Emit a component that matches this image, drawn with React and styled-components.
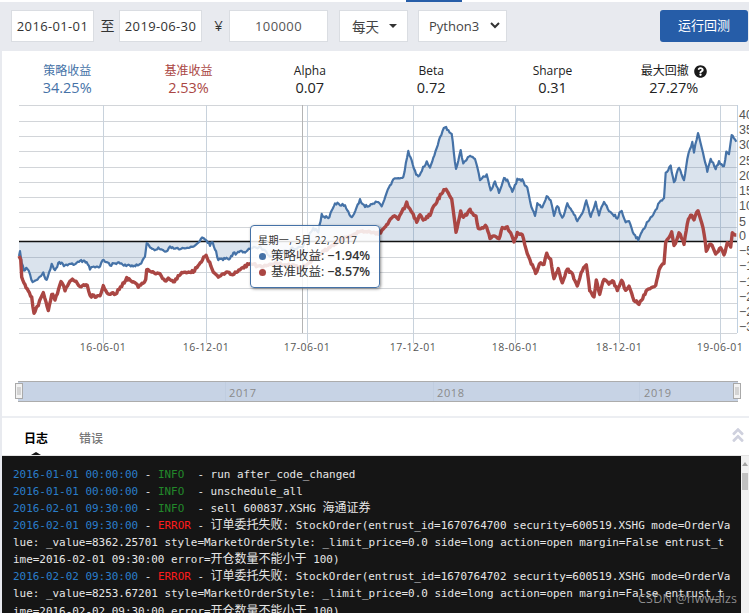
import React, { useMemo } from "react";
import styled, { createGlobalStyle } from "styled-components";
import { FaQuestionCircle, FaAngleDoubleUp } from "react-icons/fa";

const sans = `"Open Sans", "Noto Sans", "Noto Sans CJK SC", sans-serif`;

const Global = createGlobalStyle`
  html, body { margin: 0; padding: 0; background: #fff; }
  body { width: 749px; height: 613px; overflow: hidden; font-family: ${sans}; }
  * { box-sizing: border-box; }
`;

const Page = styled.div`
  width: 749px; height: 613px; overflow: hidden; position: relative;
  display: flex; flex-direction: column; background: #e8eaef;
`;
const TopStrip = styled.div`
  height: 2px; flex: none; padding-left: 406px; background: #fff;
  &::before { content: ""; display: block; width: 56px; height: 2px; background: #265da8; }
`;
const Toolbar = styled.div`
  height: 49px; flex: none; display: flex; align-items: center;
  padding: 0 1px 0 11px; background: #e8eaef;
`;
const Field = styled.div`
  width: ${(p) => p.$w}px; height: 32px; margin-top: -2px;
  margin-left: ${(p) => p.$ml || 0}px;
  display: flex; align-items: center; justify-content: center;
  background: #fff; border: 1px solid #dadde2;
  font-size: 13px; letter-spacing: ${(p) => p.$ls || 0}px; color: ${(p) => p.$c || "#333"};
`;
const Sep = styled.span`
  width: ${(p) => p.$w}px; padding-left: ${(p) => p.$pl}px; margin-top: -4px; text-align: center;
  font-size: ${(p) => p.$fs}px; color: #333;
`;
const SelectBox = styled(Field)`
  justify-content: flex-start; padding-left: ${(p) => p.$pad}px; gap: ${(p) => p.$gap}px;
  font-size: ${(p) => p.$fs}px; color: #444;
`;
const Caret = styled.i`
  width: 0; height: 0; margin-left: 2px;
  border-left: 4.5px solid transparent; border-right: 4.5px solid transparent; border-top: 4px solid #333;
`;
const RunButton = styled.button`
  width: 88px; height: 32px; margin: -2px 0 0 auto; padding: 0 0 2px; border: 0; border-radius: 3px;
  background: #265da8; color: #fff; font: 13px ${sans};
`;
const Main = styled.div`
  flex: 1; min-height: 0; margin-left: 2px; background: #fff; display: flex; flex-direction: column;
`;
const Stats = styled.div`
  height: 49px; flex: none; display: grid; grid-template-columns: repeat(6, 121.33px);
  padding: 11px 0 0 4.5px;
`;
const Stat = styled.div`
  text-align: center; color: ${(p) => p.$c || "#222"};
`;
const StatLabel = styled.div`
  font-size: 12px; line-height: 18px; display: flex; gap: 5px; align-items: center; justify-content: center;
  svg { font-size: 13px; color: #1a1a1a; }
`;
const StatValue = styled.div`font-size: 14.5px; line-height: 17px; margin-top: -1px;`;
const ChartWrap = styled.div`height: 316px; flex: none; position: relative;`;
const ChartSvg = styled.svg`display: block; text { font-family: ${sans}; }`;
const YLabel = styled.text`
  && { font-family: "Liberation Sans", sans-serif; font-size: 12.5px; fill: #555; }
`;
const Tooltip = styled.div`
  position: absolute; left: 248px; top: 125px; width: 130px; height: 63px;
  background: rgba(255,255,255,.86); border: 1px solid #4572a7; border-radius: 4px;
  box-shadow: 1px 1px 3px rgba(0,0,0,.45); padding: 7px 7px; color: #333;
`;
const TipTitle = styled.div`font-size: 10px; line-height: 14px; letter-spacing: .4px; margin-bottom: 1px;`;
const TipRow = styled.div`
  display: flex; align-items: center; font-size: 12.5px; line-height: 16px; white-space: nowrap;
  b { font-weight: 600; margin-left: 3px; }
`;
const Dot = styled.i`
  width: 7px; height: 7px; border-radius: 50%; background: ${(p) => p.$c}; margin: 0 5px 0 1px; flex: none;
`;
const Tabs = styled.div`
  height: 39px; flex: none; position: relative; display: flex; align-items: center; gap: 31px;
  padding: 2px 0 0 22px; border-top: 2px solid #eceef2;
`;
const Tab = styled.span`
  font-size: 12px; color: ${(p) => (p.$on ? "#000" : "#777")}; font-weight: ${(p) => (p.$on ? 700 : 500)};
`;
const TabArrow = styled.i`
  position: absolute; left: 29px; bottom: 0; width: 0; height: 0;
  border-left: 5px solid transparent; border-right: 5px solid transparent; border-bottom: 3px solid #151515;
`;
const Collapse = styled.span`
  position: absolute; right: 2px; top: 8px; font-size: 18px; line-height: 1; color: #cfd1de;
`;
const Terminal = styled.div`
  flex: 1; min-height: 0; overflow: hidden; display: flex; background: #151515;
  border-top: 1px solid #e4e4e4;
`;
const LogBody = styled.div`
  flex: 1; padding: 9.5px 0 0 11px; font: 10.94px/17.14px "DejaVu Sans Mono", "Noto Sans CJK SC", monospace; color: #e6e6e6;
`;
const LogLine = styled.div`white-space: pre; height: 17.14px;`;
const T = styled.span`color: ${(p) => p.$c};`;
const Cn = styled.span`font-size: 12px; line-height: 1;`;
const Scrollbar = styled.div`
  width: 8px; flex: none; background: #f1f1f1; position: relative;
  &::before { content: ""; position: absolute; left: 1px; top: 6px; border-left: 3px solid transparent; border-right: 3px solid transparent; border-bottom: 4px solid #a3a3a3; }
  &::after { content: ""; position: absolute; left: 1px; top: 17px; width: 6px; height: 17px; background: #c1c1c1; }
`;
const Watermark = styled.div`
  position: absolute; left: 638px; top: 590px; font-size: 12.5px; color: rgba(190,190,190,.72); letter-spacing: .2px;
`;

const z3 = (a) => a.map(([x, y]) => [x / 3, 100 + y / 3]);
const z4 = (a) => a.map(([x, y]) => [250 + x / 3, 100 + y / 3]);
const z5 = (a) => a.map(([x, y]) => [499 + x / 3, 100 + y / 3]);

const bluePts = [
  ...z3([[57,470],[60,455],[65,490],[72,510],[82,505],[90,525],[98,548],[110,540],[130,520],[140,543],[155,495],[165,508],[178,487],[195,498],[210,488],[220,495],[240,483],[260,487],[270,505],[300,500],[308,480],[330,495],[360,487],[375,497],[420,495],[435,470],[440,428],[460,450],[475,445],[495,458],[510,440],[540,448],[580,440],[610,412],[630,435],[638,425],[655,478],[690,475],[700,462],[725,455],[735,460]]),
  ...z4([[0,445],[30,440],[60,470],[100,455],[130,445],[158,441],[170,415],[190,385],[205,395],[215,345],[235,355],[255,310],[285,315],[305,355],[330,300],[345,320],[380,305],[395,320],[410,275],[430,240],[460,230],[475,155],[495,215],[505,230],[530,185],[540,205],[560,145],[570,110],[585,80],[605,100],[618,210],[632,150],[640,190],[660,165],[675,175],[690,240],[710,225],[722,270],[735,245]]),
  ...z5([[0,275],[15,235],[25,240],[40,278],[55,240],[70,240],[85,265],[97,320],[108,350],[115,310],[130,325],[143,292],[155,300],[165,345],[175,315],[190,355],[205,312],[218,330],[235,362],[250,340],[262,302],[275,350],[290,305],[300,345],[315,305],[330,335],[355,352],[368,330],[380,370],[390,360],[405,405],[418,418],[440,375],[470,330],[485,300],[495,295],[500,220],[515,197],[525,250],[540,200],[555,240],[565,175],[580,125],[585,155],[597,100],[612,155],[625,215],[635,175],[650,205],[660,185],[675,200],[682,155],[690,165],[698,105],[712,125]]),
];
const redPts = [
  ...z3([[57,470],[62,475],[65,530],[75,555],[85,575],[95,590],[102,640],[115,615],[130,575],[145,635],[155,580],[165,600],[183,545],[195,570],[210,540],[228,540],[240,563],[262,553],[270,588],[300,588],[310,558],[325,585],[350,578],[380,535],[400,545],[415,560],[437,540],[440,510],[480,525],[495,545],[505,535],[520,548],[545,515],[580,515],[618,465],[640,515],[655,530],[680,515],[695,525],[720,510]]),
  ...z4([[0,490],[30,500],[80,490],[158,502],[200,470],[240,440],[280,415],[330,395],[385,400],[395,395],[410,375],[430,350],[445,355],[470,310],[490,345],[500,365],[510,345],[520,360],[540,345],[550,320],[585,265],[605,295],[618,400],[632,335],[640,355],[660,330],[678,350],[685,385],[710,378],[720,418],[735,405]]),
  ...z5([[0,415],[10,385],[25,380],[45,425],[55,400],[70,405],[85,460],[97,490],[110,520],[125,485],[135,495],[143,462],[155,480],[165,535],[178,508],[190,548],[205,508],[218,520],[235,555],[250,510],[262,495],[272,570],[285,590],[292,540],[302,585],[315,535],[330,555],[340,540],[355,570],[368,540],[380,570],[390,555],[405,600],[420,612],[445,570],[470,555],[480,510],[495,490],[500,430],[518,398],[525,440],[540,398],[555,430],[565,370],[575,342],[585,360],[597,330],[612,380],[622,450],[635,430],[650,460],[665,445],[675,465],[685,430],[695,440],[700,400],[712,405]]),
];

function jitter(pts, seed, amp) {
  let s = seed;
  const rnd = () => ((s = (s * 1664525 + 1013904223) % 4294967296) / 4294967296) - 0.5;
  const out = [];
  for (let i = 0; i < pts.length - 1; i++) {
    const [x0, y0] = pts[i];
    const [x1, y1] = pts[i + 1];
    const n = Math.max(1, Math.round((x1 - x0) / 1.2));
    for (let k = 0; k < n; k++) {
      const t = k / n;
      out.push([x0 + (x1 - x0) * t, y0 + (y1 - y0) * t + rnd() * amp]);
    }
  }
  out.push(pts[pts.length - 1]);
  return out;
}
const toPath = (a) => a.map(([x, y], i) => `${i ? "L" : "M"}${x.toFixed(1)} ${y.toFixed(1)}`).join("");

const hLines = [105, 121, 136, 151, 167, 182, 197, 212, 227, 257, 272, 288, 303, 318, 333];
const vLines = [[103, "16-06-01"], [206, "16-12-01"], [307, "17-06-01"], [413, "17-12-01"], [515, "18-06-01"], [619, "18-12-01"], [720, "19-06-01"]];
const yLabels = [[119, "40"], [134, "35"], [149, "30"], [165, "25"], [180, "20"], [195, "15"], [210, "10"], [226, "5"], [240, "0"], [255, "−5"], [270, "−10"], [286, "−15"], [301, "−20"], [316, "−25"], [331, "−30"]];
const years = [[225, 229, "2017"], [433, 437, "2018"], [639, 644, "2019"]];

function Handle({ x }) {
  return (
    <g>
      <rect x={x + 0.5} y={383.5} width={7} height={15} fill="#f2f2f2" stroke="#a9a9a9" />
      <path d={`M${x + 3} 387v8M${x + 5} 387v8`} stroke="#b5b5b5" />
    </g>
  );
}

function Chart() {
  const blue = useMemo(() => jitter(bluePts, 11, 2.6), []);
  const red = useMemo(() => jitter(redPts, 29, 2.6), []);
  const area = useMemo(() => `${toPath(blue)}L${blue[blue.length - 1][0]} 241L19 241Z`, [blue]);
  return (
    <ChartSvg width="747" height="316" viewBox="2 100 747 316">
      {hLines.map((y) => (
        <path key={y} d={`M19 ${y + 0.5}H737`} stroke="#d2d5d9" />
      ))}
      {vLines.map(([x, l]) => (
        <g key={x}>
          <path d={`M${x + 0.5} 105V343`} stroke="#c8d2dc" />
          <text x={x} y={351} textAnchor="middle" fontSize="10.5" letterSpacing=".45" fill="#555">{l}</text>
        </g>
      ))}
      <path d="M737.5 105V333" stroke="#c0d0e0" />
      <path d="M302.5 105V333" stroke="#b4b4b4" />
      <path d={area} fill="#4572a7" fillOpacity=".2" />
      <path d="M19 241.5H737" stroke="#111" strokeWidth="1.4" />
      <path d={toPath(blue)} fill="none" stroke="#4572a7" strokeWidth="2.2" strokeLinejoin="round" />
      <path d={toPath(red)} fill="none" stroke="#aa4643" strokeWidth="3.4" strokeLinejoin="round" />
      {yLabels.map(([y, l]) => (
        <YLabel key={l} x={739} y={y}>{l}</YLabel>
      ))}
      <rect x="18" y="381" width="720" height="21" fill="#c7d3e5" />
      <path d="M18 381.5H738M18 401.5H738" stroke="#acacac" />
      {years.map(([sx, tx, l]) => (
        <g key={l}>
          <path d={`M${sx + 0.5} 382V401`} stroke="#c0cde0" />
          <text x={tx} y={397} fontSize="11" letterSpacing=".6" fill="#8a8a8a">{l}</text>
        </g>
      ))}
      <Handle x={15} />
      <Handle x={733} />
    </ChartSvg>
  );
}

const BLUE = "#2a7dc9";
const GREEN = "#22882a";
const RED = "#ff1c1c";

const Head = ({ ts, level, children }) => (
  <LogLine>
    <T $c={BLUE}>{ts}</T>{" - "}
    <T $c={level === "INFO" ? GREEN : RED}>{level}</T>
    {level === "INFO" ? "  - " : " - "}{children}
  </LogLine>
);

export default function App() {
  return (
    <Page>
      <Global />
      <TopStrip />
      <Toolbar>
        <Field $w={83} $ls={0.35}>2016-01-01</Field>
        <Sep $w={25} $pl={2} $fs={14}>至</Sep>
        <Field $w={83} $ls={0.35}>2019-06-30</Field>
        <Sep $w={27} $pl={6} $fs={15}>¥</Sep>
        <Field $w={99} $c="#555" $ls={0.4}>100000</Field>
        <SelectBox $w={69} $ml={11} $pad={12} $gap={8} $fs={13.5}>每天 <Caret /></SelectBox>
        <SelectBox $w={89} $ml={10} $pad={10} $gap={11} $fs={13}>
          Python3
          <svg width="10" height="7" viewBox="0 0 10 7"><path d="M1 1l4 4 4-4" fill="none" stroke="#333" strokeWidth="2" /></svg>
        </SelectBox>
        <RunButton>运行回测</RunButton>
      </Toolbar>
      <Main>
        <Stats>
          <Stat $c="#4572a7"><StatLabel>策略收益</StatLabel><StatValue>34.25%</StatValue></Stat>
          <Stat $c="#aa4643"><StatLabel>基准收益</StatLabel><StatValue>2.53%</StatValue></Stat>
          <Stat><StatLabel>Alpha</StatLabel><StatValue>0.07</StatValue></Stat>
          <Stat><StatLabel>Beta</StatLabel><StatValue>0.72</StatValue></Stat>
          <Stat><StatLabel>Sharpe</StatLabel><StatValue>0.31</StatValue></Stat>
          <Stat><StatLabel>最大回撤 <FaQuestionCircle /></StatLabel><StatValue>27.27%</StatValue></Stat>
        </Stats>
        <ChartWrap>
          <Chart />
          <Tooltip>
            <TipTitle>星期一, 5月 22, 2017</TipTitle>
            <TipRow><Dot $c="#4572a7" />策略收益: <b>−1.94%</b></TipRow>
            <TipRow><Dot $c="#aa4643" />基准收益: <b>−8.57%</b></TipRow>
          </Tooltip>
        </ChartWrap>
        <Tabs>
          <Tab $on>日志</Tab>
          <Tab>错误</Tab>
          <TabArrow />
          <Collapse><FaAngleDoubleUp /></Collapse>
        </Tabs>
        <Terminal>
          <LogBody>
            <Head ts="2016-01-01 00:00:00" level="INFO">run after_code_changed</Head>
            <Head ts="2016-01-01 00:00:00" level="INFO">unschedule_all</Head>
            <Head ts="2016-02-01 09:30:00" level="INFO">sell 600837.XSHG <Cn>海通证券</Cn></Head>
            <Head ts="2016-02-01 09:30:00" level="ERROR"><Cn>订单委托失败</Cn>: StockOrder(entrust_id=1670764700 security=600519.XSHG mode=OrderVa</Head>
            <LogLine>lue: _value=8362.25701 style=MarketOrderStyle: _limit_price=0.0 side=long action=open margin=False entrust_t</LogLine>
            <LogLine>ime=2016-02-01 09:30:00 error=<Cn>开仓数量不能小于</Cn> 100)</LogLine>
            <Head ts="2016-02-02 09:30:00" level="ERROR"><Cn>订单委托失败</Cn>: StockOrder(entrust_id=1670764702 security=600519.XSHG mode=OrderVa</Head>
            <LogLine>lue: _value=8253.67201 style=MarketOrderStyle: _limit_price=0.0 side=long action=open margin=False entrust_t</LogLine>
            <LogLine>ime=2016-02-02 09:30:00 error=<Cn>开仓数量不能小于</Cn> 100)</LogLine>
          </LogBody>
          <Scrollbar />
        </Terminal>
      </Main>
      <Watermark>CSDN @hwwalzs</Watermark>
    </Page>
  );
}
